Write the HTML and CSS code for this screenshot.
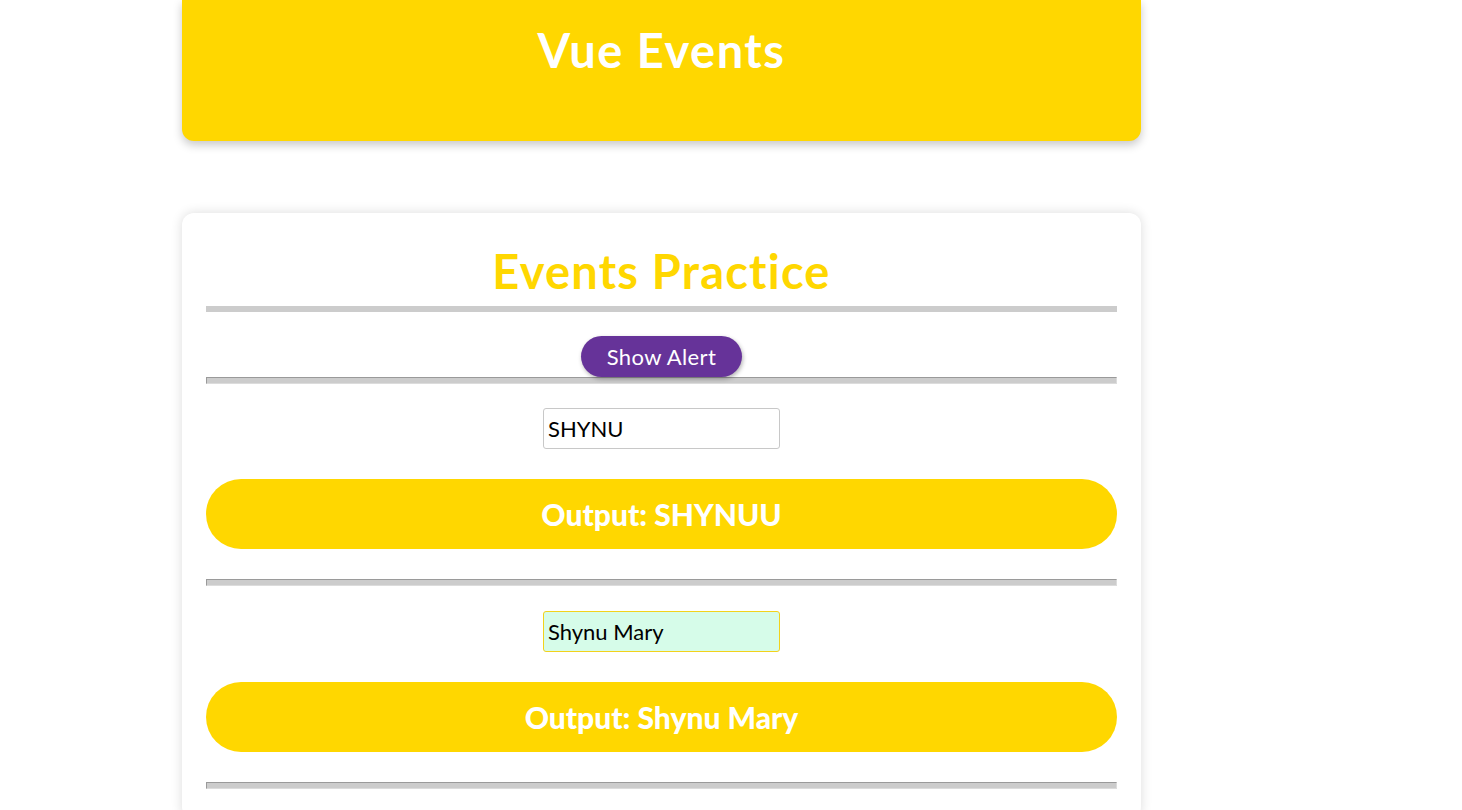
FILE: index.html
```html
<!DOCTYPE html>
<html lang="en">
<head>
<meta charset="utf-8">
<title>Vue Events</title>
<link rel="stylesheet" href="styles.css">
</head>
<body>
<div class="page">
  <header class="banner">
    <h1 class="banner-title">Vue Events</h1>
  </header>
  <main class="card">
    <h2 class="card-title">Events Practice</h2>
    <div class="divider-solid"></div>
    <div class="row row-button">
      <button class="btn-alert" type="button">Show Alert</button>
    </div>
    <hr class="divider">
    <div class="row row-input">
      <input class="text-input" type="text" value="SHYNU">
    </div>
    <div class="output">Output: SHYNUU</div>
    <hr class="divider divider-spaced">
    <div class="row row-input-2">
      <input class="text-input text-input-active" type="text" value="Shynu Mary">
    </div>
    <div class="output">Output: Shynu Mary</div>
    <hr class="divider divider-spaced">
  </main>
</div>
</body>
</html>
```
FILE: styles.css
```css
* { box-sizing: border-box; }
html, body { margin: 0; padding: 0; background: #ffffff; }
body { font-family: "Lato", "Noto Sans", sans-serif; color: #000; }

.page {
  width: 959px;
  margin-left: 182px;
  display: flex;
  flex-direction: column;
}

.banner {
  height: 141px;
  background: #ffd700;
  border-radius: 0 0 12px 12px;
  box-shadow: 0 4px 10px rgba(0, 0, 0, 0.22);
  padding-top: 20px;
}
.banner-title {
  margin: 0;
  text-align: center;
  color: #ffffff;
  font-size: 47px;
  line-height: 60px;
  font-weight: 700;
  letter-spacing: 1.5px;
}

.card {
  margin-top: 72px;
  background: #ffffff;
  border-radius: 12px;
  box-shadow: 0 0 12px rgba(0, 0, 0, 0.14);
  padding: 30px 24px 30px;
  display: flex;
  flex-direction: column;
}
.card-title {
  margin: 0 0 7px;
  text-align: center;
  color: #ffd700;
  font-size: 47px;
  line-height: 56px;
  font-weight: 700;
  letter-spacing: 1.2px;
}
.divider-solid {
  height: 6px;
  background: #cccccc;
}
.row {
  display: flex;
  justify-content: center;
}
.row-button { padding-top: 24px; }
.btn-alert {
  width: 161px;
  height: 41px;
  border: none;
  border-radius: 21px;
  background: #663399;
  color: #ffffff;
  font-family: inherit;
  font-size: 22px;
  letter-spacing: 0.4px;
  box-shadow: 1px 2px 4px rgba(0, 0, 0, 0.3);
  padding: 0;
  position: relative;
  z-index: 1;
}
.divider {
  margin: 0;
  height: 7px;
  border-top: 1px solid #9a9a9a;
  border-left: 1px solid #9a9a9a;
  border-right: 1px solid #dcdcdc;
  border-bottom: 1px solid #dcdcdc;
  background: #cccccc;
}
.divider-spaced { margin-top: 30px; }
.row-input { padding-top: 24px; }
.row-input-2 { padding-top: 25px; }
.text-input {
  width: 237px;
  height: 41px;
  border: 1px solid #c8c8c8;
  border-radius: 3px;
  padding: 0 4px;
  font-family: inherit;
  font-size: 22px;
  color: #000;
  background: #fff;
  outline: none;
}
.text-input-active {
  background: #d6fce9;
  border-color: #f2d21c;
}
.output {
  margin-top: 30px;
  height: 70px;
  border-radius: 35px;
  background: #ffd700;
  color: #ffffff;
  font-size: 30px;
  font-weight: 900;
  display: flex;
  align-items: center;
  justify-content: center;
}
```
